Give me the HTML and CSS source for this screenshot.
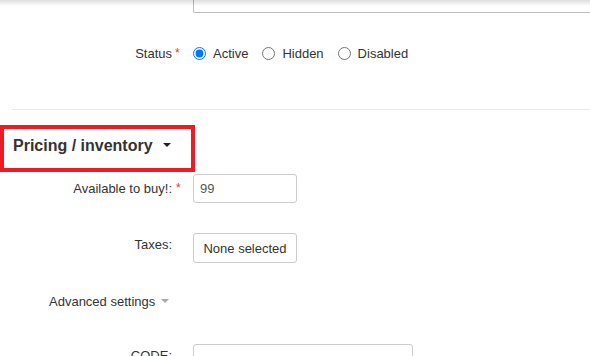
FILE: index.html
```html
<!DOCTYPE html>
<html lang="en">
<head>
    <meta charset="UTF-8">
    <meta name="viewport" content="width=device-width, initial-scale=1.0">
    <title>Edit product</title>
    <link rel="stylesheet" href="styles.css">
</head>
<body>
    <div class="top-shadow"></div>
    <form class="product-form">
        <div class="form-row row-clip">
            <div class="form-label"></div>
            <div class="req"></div>
            <div class="field-clip"></div>
        </div>

        <div class="form-row row-status">
            <label class="form-label">Status</label>
            <span class="req">*</span>
            <div class="radio-group">
                <label class="radio"><input type="radio" name="status" checked>Active</label>
                <label class="radio"><input type="radio" name="status">Hidden</label>
                <label class="radio"><input type="radio" name="status">Disabled</label>
            </div>
        </div>

        <hr class="divider">

        <h3 class="section-title">
            Pricing / inventory<span class="caret"></span>
        </h3>

        <div class="form-row row-amount">
            <label class="form-label" for="amount">Available to buy!:</label>
            <span class="req">*</span>
            <input class="text-input input-small" id="amount" type="text" value="99">
        </div>

        <div class="form-row row-top row-taxes">
            <label class="form-label">Taxes:</label>
            <span class="req"></span>
            <button type="button" class="select-button">None selected</button>
        </div>

        <div class="advanced">
            Advanced settings<span class="caret caret-grey"></span>
        </div>

        <div class="form-row row-top row-code">
            <label class="form-label" for="code">CODE:</label>
            <span class="req"></span>
            <input class="text-input input-wide" id="code" type="text">
        </div>
    </form>
</body>
</html>
```

FILE: styles.css
```css
body {
    font-family: "Liberation Sans", Arial, sans-serif;
    font-size: 13px;
    color: #333;
    background-color: #fff;
    margin: 0;
    overflow: hidden;
}
.top-shadow {
    position: fixed;
    top: 0;
    left: 0;
    right: 0;
    height: 6px;
    background: linear-gradient(rgba(0, 0, 0, 0.13), rgba(0, 0, 0, 0));
}
.form-row {
    display: grid;
    grid-template-columns: 172px 21px 1fr;
    align-items: center;
    line-height: 15px;
}
.row-top {
    align-items: start;
}
.form-label {
    text-align: right;
}
.row-top .form-label {
    padding-top: 4px;
}
.req {
    color: #e5333b;
    font-size: 12px;
    padding-left: 4px;
}
.row-top .req {
    padding-top: 4px;
}
.field-clip {
    height: 12px;
    border-left: 1px solid #bbb;
    border-bottom: 1px solid #bbb;
    border-bottom-left-radius: 2px;
}
.row-status {
    margin-top: 30px;
    height: 20px;
}
.row-status .req {
    padding-left: 3px;
}
.radio-group {
    display: flex;
    align-items: center;
    gap: 14px;
}
.radio {
    display: flex;
    align-items: center;
}
.radio input {
    width: 13px;
    height: 13px;
    margin: 0 7px 0 0;
}
.divider {
    border: none;
    border-top: 1px solid #e8e8e8;
    margin: 46px 0 0 12px;
}
.section-title {
    width: 178px;
    margin: 15px 0 0;
    padding: 7px 0 12px 9px;
    border: 4px solid #ed1c24;
    font-size: 16px;
    font-weight: bold;
    line-height: 20px;
    color: #333;
}
.caret {
    display: inline-block;
    width: 0;
    height: 0;
    margin-left: 10px;
    vertical-align: 4px;
    border-left: 4px solid transparent;
    border-right: 4px solid transparent;
    border-top: 4px solid #222;
}
.caret-grey {
    margin-left: 6px;
    vertical-align: 3px;
    border-top-color: #aaa;
}
.row-amount {
    margin-top: 2px;
}
.text-input {
    box-sizing: border-box;
    height: 29px;
    border: 1px solid #ccc;
    border-radius: 3px;
    padding: 0 6px;
    font-family: inherit;
    font-size: 13px;
    color: #555;
    outline: none;
}
.input-small {
    width: 104px;
}
.input-wide {
    width: 220px;
    height: 30px;
}
.row-taxes {
    margin-top: 30px;
}
.select-button {
    justify-self: start;
    box-sizing: border-box;
    width: 104px;
    height: 30px;
    background-color: #fff;
    border: 1px solid #ccc;
    border-radius: 3px;
    font-family: inherit;
    font-size: 13px;
    color: #333;
    padding: 0;
}
.advanced {
    margin-top: 29px;
    padding-left: 49px;
    line-height: 20px;
}
.row-code {
    margin-top: 32px;
}
```
